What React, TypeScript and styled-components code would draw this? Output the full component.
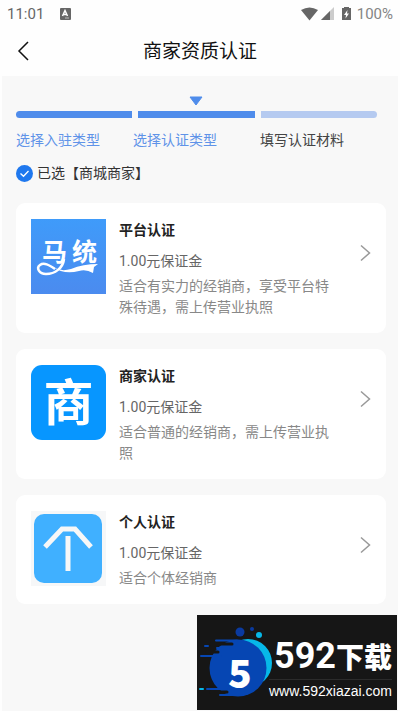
import React from "react";
import styled, { createGlobalStyle } from "styled-components";

const GlobalStyle = createGlobalStyle`
  * { box-sizing: border-box; }
  html, body { margin: 0; background: #fefefe; }
  body { font-family: Roboto, "Noto Sans CJK SC", sans-serif; color: #222; }
  button { font: inherit; color: inherit; background: none; border: 0; padding: 0; cursor: pointer; }
`;

const Page = styled.div`
  display: flex;
  flex-direction: column;
  min-height: 100vh;
  padding: 0 2px;
  background: #fefefe;
`;

const StatusBar = styled.div`
  display: flex;
  align-items: center;
  height: 28px;
  padding: 0 5px;
  color: #666;
  font-size: 15px;
`;

const StatusIcons = styled.div`
  display: flex;
  align-items: center;
  margin-left: auto;
  color: #858585;
`;

const Clock = styled.span`
  margin-right: 16px;
`;

const Header = styled.header`
  display: grid;
  grid-template-columns: 46px 1fr 46px;
  align-items: center;
  height: 48px;
  padding-bottom: 2px;
`;

const BackButton = styled.button`
  display: flex;
  align-items: center;
  height: 46px;
  padding-left: 15px;
`;

const Title = styled.h1`
  margin: 0;
  padding-top: 2px;
  text-align: center;
  font-size: 19px;
  line-height: 28px;
  font-weight: 400;
  color: #111;
`;

const Content = styled.main`
  flex: 1;
  padding: 20px 12px 16px 14px;
  background: #f8f8f8;
`;

const Progress = styled.div`
  display: grid;
  grid-template-columns: repeat(3, 1fr);
  column-gap: 6px;
  row-gap: 5px;
  margin-right: 9px;
`;

const Pointer = styled.svg`
  grid-column: 2;
  justify-self: center;
`;

const Bar = styled.span<{ $done?: boolean }>`
  grid-row: 2;
  height: 7px;
  background: ${(p) => (p.$done ? "#4f8ceb" : "#b5caf0")};
  &:nth-of-type(1) { border-radius: 4px 0 0 4px; }
  &:nth-of-type(3) { border-radius: 0 4px 4px 0; }
`;

const StepLabels = styled.ol`
  display: grid;
  grid-template-columns: 117fr 127fr 117fr;
  margin: 11px 9px 0 0;
  padding: 0;
  list-style: none;
  font-size: 14px;
  line-height: 22px;
`;

const StepLabel = styled.li<{ $done?: boolean }>`
  color: ${(p) => (p.$done ? "#5f93e8" : "#444")};
`;

const Selected = styled.p`
  display: flex;
  align-items: center;
  gap: 4px;
  margin: 11px 0 19px;
  font-size: 14px;
  line-height: 22px;
  color: #333;
`;

const CardList = styled.div`
  display: flex;
  flex-direction: column;
  gap: 16px;
`;

const Card = styled.button`
  display: flex;
  align-items: flex-start;
  width: 100%;
  padding: 16px 15px 15px;
  border-radius: 9px;
  background: #fff;
  text-align: left;
`;

const Picture = styled.svg`
  flex: none;
  margin-right: 13px;
  overflow: visible;
`;

const CardText = styled.span`
  flex: 1;
  display: flex;
  flex-direction: column;
`;

const CardTitle = styled.strong`
  margin-bottom: 10px;
  font-size: 14px;
  line-height: 22px;
  font-weight: 700;
`;

const Price = styled.span`
  margin-bottom: 5px;
  font-size: 14px;
  line-height: 20px;
  color: #666;
`;

const Description = styled.span`
  font-size: 14px;
  line-height: 21px;
  color: #888;
`;

const ArrowBox = styled.span`
  display: flex;
  align-items: center;
  justify-content: flex-end;
  width: 33px;
  height: 68px;
`;

const Watermark = styled.aside`
  position: fixed;
  right: 3px;
  bottom: 1px;
  display: flex;
  width: 200px;
  height: 95px;
  background: #161616;
  color: #fff;
`;

const WatermarkText = styled.div`
  display: flex;
  flex-direction: column;
  margin: 18px 0 0 -8px;
`;

const WatermarkName = styled.div`
  display: flex;
  align-items: baseline;
  height: 47px;
  padding-left: 5px;
  border-bottom: 1px solid #2b2b2b;
  font: 900 28px/46px "Noto Sans CJK SC", sans-serif;
  white-space: nowrap;
`;

const WatermarkDigits = styled.span`
  font: 700 36px/46px Roboto, sans-serif;
`;

const WatermarkUrl = styled.div`
  font: 14px/22px "Liberation Sans", Arial, sans-serif;
`;

const cjk = '"Noto Sans CJK SC", sans-serif';

const PlatformPicture = () => (
  <Picture width="75" height="75" viewBox="0 0 75 75" aria-hidden="true">
    <defs>
      <linearGradient id="platform" x2="0" y2="1">
        <stop stopColor="#3f9bfa" />
        <stop offset="1" stopColor="#4b8bef" />
      </linearGradient>
    </defs>
    <rect width="75" height="75" fill="url(#platform)" />
    <g fill="#fff" fontFamily={cjk} fontWeight="700" fontSize="25">
      <text x="11" y="42">马</text>
      <text x="41" y="42">统</text>
    </g>
    <path
      d="M33 40C32 49 24 55 15 55C8 55 5 49 9 46C13 43 18 46 24 50"
      fill="none"
      stroke="#fff"
      strokeWidth="2.500"
    />
    <path fill="#fff" d="M22 48Q30 53 40 50Q52 45 67 45L63 48L62 54Q55 50 48 52Q33 56 22 48Z" />
  </Picture>
);

const MerchantPicture = () => (
  <Picture width="75" height="75" viewBox="0 0 75 75" aria-hidden="true">
    <rect width="75" height="75" rx="11" fill="#0796ff" />
    <text x="37.500" y="56" textAnchor="middle" fontFamily={cjk} fontWeight="700" fontSize="50" fill="#fff">商</text>
  </Picture>
);

const PersonalPicture = () => (
  <Picture width="75" height="75" viewBox="0 0 75 75" aria-hidden="true">
    <rect width="75" height="75" fill="#f6f7f8" />
    <rect x="3" y="3" width="68" height="69" rx="10" fill="#40b0ff" />
    <path d="M14 36L31 18H44L60 36M37 25V60" fill="none" stroke="#f7f7f7" strokeWidth="5" />
  </Picture>
);

const options = [
  { title: "平台认证", text: "适合有实力的经销商，享受平台特殊待遇，需上传营业执照", Icon: PlatformPicture },
  { title: "商家认证", text: "适合普通的经销商，需上传营业执照", Icon: MerchantPicture },
  { title: "个人认证", text: "适合个体经销商", Icon: PersonalPicture },
];

export default function App() {
  return (
    <Page>
      <GlobalStyle />
      <StatusBar>
        <Clock>11:01</Clock>
        <svg width="11" height="12" viewBox="0 0 11 12" aria-hidden="true">
          <rect width="11" height="12" rx="1" fill="#666" />
          <path d="M2.500 8L5 2.500L7.500 8M3.500 6.500H6.500" fill="none" stroke="#fff" strokeWidth="1.500" />
          <path d="M5 10H9" stroke="#bbb" />
        </svg>
        <StatusIcons>
          <svg width="56" height="16" viewBox="0 0 56 16" aria-hidden="true">
            <path d="M0 4Q8.500 -1 17 4L8.500 14.500Z" fill="#666" />
            <path d="M33 1V14H20Z" fill="#ccc" />
            <path d="M29 5V14H20Z" fill="#666" />
            <path d="M41 2H43V1H48V2H50V14H41Z" fill="#666" />
            <path d="M46.500 4L43 9H45L44.500 12.500L48 7.500H46Z" fill="#fff" />
          </svg>
          <span>100%</span>
        </StatusIcons>
      </StatusBar>
      <Header>
        <BackButton aria-label="返回">
          <svg width="12" height="20" viewBox="0 0 12 20" fill="none" stroke="#111" strokeWidth="1.500">
            <path d="M11 1L2 10L11 19" />
          </svg>
        </BackButton>
        <Title>商家资质认证</Title>
      </Header>
      <Content>
        <Progress>
          <Pointer width="14" height="10" viewBox="0 0 14 10" aria-hidden="true">
            <path d="M1 1H13L7 9Z" fill="#4f8ceb" stroke="#4f8ceb" strokeLinejoin="round" />
          </Pointer>
          <Bar $done />
          <Bar $done />
          <Bar />
        </Progress>
        <StepLabels>
          <StepLabel $done>选择入驻类型</StepLabel>
          <StepLabel $done>选择认证类型</StepLabel>
          <StepLabel>填写认证材料</StepLabel>
        </StepLabels>
        <Selected>
          <svg width="17" height="17" viewBox="0 0 17 17" aria-hidden="true">
            <circle cx="8.500" cy="8.500" r="8.500" fill="#1f78ee" />
            <path d="M4.500 8.500L7.500 11.300L12.500 6" fill="none" stroke="#fff" strokeWidth="1.300" />
          </svg>
          已选【商城商家】
        </Selected>
        <CardList>
          {options.map(({ title, text, Icon }) => (
            <Card key={title}>
              <Icon />
              <CardText>
                <CardTitle>{title}</CardTitle>
                <Price>1.00元保证金</Price>
                <Description>{text}</Description>
              </CardText>
              <ArrowBox>
                <svg width="11" height="18" viewBox="0 0 11 18" fill="none" stroke="#999" strokeWidth="1.500" aria-hidden="true">
                  <path d="M1 1.500L9.500 9L1 16.500" />
                </svg>
              </ArrowBox>
            </Card>
          ))}
        </CardList>
      </Content>
      <Watermark>
        <svg width="80" height="95" viewBox="0 0 80 95" aria-hidden="true">
          <circle cx="51" cy="48" r="24" fill="#07b8e8" />
          <circle cx="41" cy="53" r="28.500" fill="#0646b3" />
          <circle cx="43" cy="17" r="4.500" fill="#0a3aa0" />
          <circle cx="55" cy="14" r="2" fill="#0a3aa0" />
          <circle cx="62" cy="20" r="3" fill="#07b8e8" />
          <g strokeWidth="3" strokeLinecap="round">
            <path d="M14 29H35M10 37H21M14 77H30" stroke="#161616" />
            <path d="M19 25.500H40M20 33H32M4 41H24M10 74H30M23 80H45" stroke="#0646b3" strokeWidth="2" />
            <path d="M8 31H11" stroke="#0646b3" strokeWidth="2" />
            <path d="M3 74H6" stroke="#07b8e8" strokeWidth="2" />
          </g>
          <text x="43" y="73" textAnchor="middle" fontFamily={cjk} fontWeight="900" fontSize="39" fill="#fff">5</text>
        </svg>
        <WatermarkText>
          <WatermarkName>
            <WatermarkDigits>592</WatermarkDigits>下载
          </WatermarkName>
          <WatermarkUrl>www.592xiazai.com</WatermarkUrl>
        </WatermarkText>
      </Watermark>
    </Page>
  );
}
